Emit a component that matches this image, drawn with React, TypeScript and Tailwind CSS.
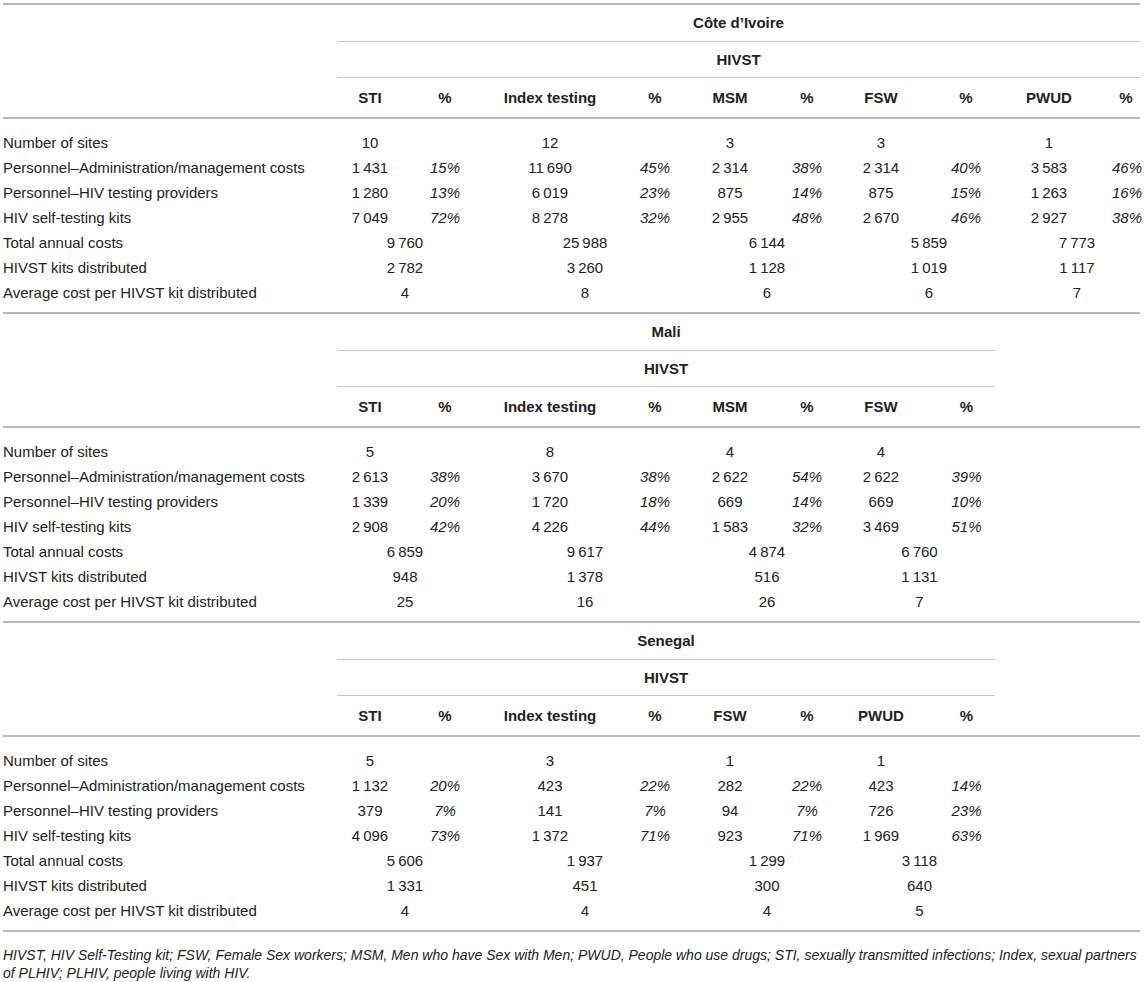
import React from "react";

type RowKind = "single" | "pair" | "merged";
type Row = { label: string; kind: RowKind; values: string[] };

const n = (s: string) => s.replace(/ /g, "\u2009");

type SectionProps = {
  title: string;
  groups: string[];
  gridClass: string;
  titleW: string;
  pads: string[];
  rows: Row[];
};

function Section({ title, groups, gridClass, titleW, pads, rows }: SectionProps) {
  return (
    <div className="border-t-2 border-[#b8b8b8]">
      <div className="flex h-[37px]">
        <div className="w-[334px] shrink-0" />
        <div className={`${titleW} flex items-center justify-center border-b border-[#c6c6c6] font-bold`}>
          {title}
        </div>
      </div>
      <div className="flex h-[36px]">
        <div className="w-[334px] shrink-0" />
        <div className={`${titleW} flex items-center justify-center border-b border-[#c6c6c6] font-bold`}>
          HIVST
        </div>
      </div>
      <div className={`grid ${gridClass} h-[41px] items-center border-b-2 border-[#b8b8b8] font-bold`}>
        <div />
        {groups.map((g, i) => (
          <React.Fragment key={g}>
            <div className={`text-center ${pads[i * 2]}`}>{g}</div>
            <div className={`text-center ${pads[i * 2 + 1]}`}>%</div>
          </React.Fragment>
        ))}
      </div>
      <div className="pt-[11px] pb-[7px]">
        {rows.map((r) => (
          <div key={r.label} className={`grid ${gridClass} h-[25px] items-center`}>
            <div className="whitespace-nowrap">{r.label}</div>
            {r.kind === "single" &&
              r.values.map((v, i) => (
                <React.Fragment key={i}>
                  <div className={`text-center ${pads[i * 2]}`}>{n(v)}</div>
                  <div />
                </React.Fragment>
              ))}
            {r.kind === "pair" &&
              groups.map((_, i) => (
                <React.Fragment key={i}>
                  <div className={`text-center ${pads[i * 2]}`}>{n(r.values[i * 2])}</div>
                  <div className={`text-center italic ${pads[i * 2 + 1]}`}>{r.values[i * 2 + 1]}</div>
                </React.Fragment>
              ))}
            {r.kind === "merged" &&
              r.values.map((v, i) => (
                <div key={i} className="col-span-2 text-center">
                  {n(v)}
                </div>
              ))}
          </div>
        ))}
      </div>
    </div>
  );
}

const LABELS = [
  "Number of sites",
  "Personnel\u2013Administration/management costs",
  "Personnel\u2013HIV testing providers",
  "HIV self-testing kits",
  "Total annual costs",
  "HIVST kits distributed",
  "Average cost per HIVST kit distributed",
];

function makeRows(d: string[][]): Row[] {
  const kinds: RowKind[] = ["single", "pair", "pair", "pair", "merged", "merged", "merged"];
  return LABELS.map((label, i) => ({ label, kind: kinds[i], values: d[i] }));
}

const civ = makeRows([
  ["10", "12", "3", "3", "1"],
  ["1 431", "15%", "11 690", "45%", "2 314", "38%", "2 314", "40%", "3 583", "46%"],
  ["1 280", "13%", "6 019", "23%", "875", "14%", "875", "15%", "1 263", "16%"],
  ["7 049", "72%", "8 278", "32%", "2 955", "48%", "2 670", "46%", "2 927", "38%"],
  ["9 760", "25 988", "6 144", "5 859", "7 773"],
  ["2 782", "3 260", "1 128", "1 019", "1 117"],
  ["4", "8", "6", "6", "7"],
]);

const mali = makeRows([
  ["5", "8", "4", "4"],
  ["2 613", "38%", "3 670", "38%", "2 622", "54%", "2 622", "39%"],
  ["1 339", "20%", "1 720", "18%", "669", "14%", "669", "10%"],
  ["2 908", "42%", "4 226", "44%", "1 583", "32%", "3 469", "51%"],
  ["6 859", "9 617", "4 874", "6 760"],
  ["948", "1 378", "516", "1 131"],
  ["25", "16", "26", "7"],
]);

const sen = makeRows([
  ["5", "3", "1", "1"],
  ["1 132", "20%", "423", "22%", "282", "22%", "423", "14%"],
  ["379", "7%", "141", "7%", "94", "7%", "726", "23%"],
  ["4 096", "73%", "1 372", "71%", "923", "71%", "1 969", "63%"],
  ["5 606", "1 937", "1 299", "3 118"],
  ["1 331", "451", "300", "640"],
  ["4", "4", "4", "5"],
]);

const GRID5 = "grid-cols-[327px_80px_70px_140px_70px_80px_74px_74px_96px_70px_56px]";
const GRID4 = "grid-cols-[327px_80px_70px_140px_70px_80px_74px_74px_77px_1fr]";
const PADS5 = ["", "", "", "", "", "", "", "", "", "pl-[28px]"];
const PADS4 = ["", "", "", "", "", "", "", "pl-[20px]"];

export default function App() {
  return (
    <div
      className="w-[1145px] bg-white pt-[3px] pl-[3px] pr-[5px] text-[15px] leading-[18px] text-[#222]"
      style={{ fontFamily: '"Liberation Sans", Arial, sans-serif' }}
    >
      <Section title="Côte d’Ivoire" groups={["STI", "Index testing", "MSM", "FSW", "PWUD"]} gridClass={GRID5} titleW="w-[803px]" pads={PADS5} rows={civ} />
      <Section title="Mali" groups={["STI", "Index testing", "MSM", "FSW"]} gridClass={GRID4} titleW="w-[658px]" pads={PADS4} rows={mali} />
      <Section title="Senegal" groups={["STI", "Index testing", "FSW", "PWUD"]} gridClass={GRID4} titleW="w-[658px]" pads={PADS4} rows={sen} />
      <div className="border-t-2 border-[#b8b8b8]" />
      <p className="mt-[14px] text-[14px] leading-[18px] italic">
        HIVST, HIV Self-Testing kit; FSW, Female Sex workers; MSM, Men who have Sex with Men; PWUD, People who use drugs; STI, sexually transmitted infections; Index, sexual partners of PLHIV; PLHIV, people living with HIV.
      </p>
    </div>
  );
}
